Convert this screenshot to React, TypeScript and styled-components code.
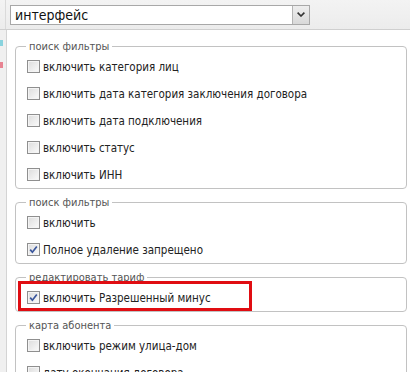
import styled, { createGlobalStyle } from "styled-components";

const GlobalStyle = createGlobalStyle`
  html, body {
    margin: 0;
    padding: 0;
    background: #ffffff;
  }
  body {
    font-family: "DejaVu Sans Condensed", "DejaVu Sans", sans-serif;
    color: #222222;
  }
`;

type Option = {
  label: string;
  checked?: boolean;
  highlighted?: boolean;
};

type Group = {
  title: string;
  options: Option[];
};

const groups: Group[] = [
  {
    title: "поиск фильтры",
    options: [
      { label: "включить категория лиц" },
      { label: "включить дата категория заключения договора" },
      { label: "включить дата подключения" },
      { label: "включить статус" },
      { label: "включить ИНН" },
    ],
  },
  {
    title: "поиск фильтры",
    options: [
      { label: "включить" },
      { label: "Полное удаление запрещено", checked: true },
    ],
  },
  {
    title: "редактировать тариф",
    options: [
      { label: "включить Разрешенный минус", checked: true, highlighted: true },
    ],
  },
  {
    title: "карта абонента",
    options: [
      { label: "включить режим улица-дом" },
      { label: "дату окончания договора" },
    ],
  },
];

function Checkbox({ checked }: { checked?: boolean }) {
  return (
    <Box>
      {checked && (
        <svg width="9" height="9" viewBox="0 0 9 9">
          <path
            d="M1.2 4.6 L3.4 7.2 L7.8 1.4"
            fill="none"
            stroke="#3a569c"
            strokeWidth="1.7"
          />
        </svg>
      )}
    </Box>
  );
}

function App() {
  return (
    <Page>
      <GlobalStyle />
      <TopBar>
        <TopDivider />
        <Select>
          <SelectValue>интерфейс</SelectValue>
          <SelectButton>
            <svg width="8" height="5" viewBox="0 0 8 5">
              <path d="M0.6 0.6 L4 4 L7.4 0.6" fill="none" stroke="#333" strokeWidth="1.6" />
            </svg>
          </SelectButton>
        </Select>
      </TopBar>

      <Body>
        <SideStrip>
          <SideMark $color="#5cc6d6" $top={10} />
          <SideMark $color="#e4566a" $top={32} />
        </SideStrip>

        <Content>
          {groups.map((group, i) => (
            <Fieldset key={i}>
              <Legend>{group.title}</Legend>
              {group.options.map((option) => (
                <Row key={option.label}>
                  {option.highlighted && <Highlight />}
                  <Checkbox checked={option.checked} />
                  <Label>{option.label}</Label>
                </Row>
              ))}
            </Fieldset>
          ))}
        </Content>
      </Body>
    </Page>
  );
}

const Page = styled.div`
  width: 410px;
  height: 372px;
  overflow: hidden;
  display: flex;
  flex-direction: column;
`;

const TopBar = styled.div`
  height: 30px;
  flex-shrink: 0;
  display: flex;
  align-items: center;
  background: linear-gradient(#f3f3f3, #ececec);
  border-bottom: 1px solid #cfcfcf;
  box-sizing: border-box;
`;

const TopDivider = styled.div`
  width: 6px;
  height: 100%;
  margin-right: 4px;
  border-right: 1px solid #dadada;
  box-sizing: border-box;
`;

const Select = styled.div`
  width: 300px;
  height: 20px;
  display: flex;
  border: 1px solid #a8a8a8;
  background: #ffffff;
  box-sizing: border-box;
`;

const SelectValue = styled.div`
  flex: 1;
  padding-left: 4px;
  font-size: 14px;
  line-height: 18px;
  color: #111111;
`;

const SelectButton = styled.div`
  width: 16px;
  display: flex;
  align-items: center;
  justify-content: center;
  border-left: 1px solid #b4b4b4;
  background: linear-gradient(#eeeeee, #d9d9d9);
`;

const Body = styled.div`
  flex: 1;
  display: flex;
  min-height: 0;
`;

const SideStrip = styled.div`
  position: relative;
  width: 6px;
  flex-shrink: 0;
  background: #f0f0f0;
  border-right: 1px solid #d4d4d4;
`;

const SideMark = styled.div<{ $color: string; $top: number }>`
  position: absolute;
  left: 0;
  top: ${(p) => p.$top}px;
  width: 3px;
  height: 6px;
  background: ${(p) => p.$color};
  opacity: 0.7;
`;

const Content = styled.div`
  flex: 1;
  padding: 10px 3px 0 8px;
  display: flex;
  flex-direction: column;
  gap: 7px;
`;

const Fieldset = styled.fieldset`
  margin: 0;
  padding: 0 10px 0 11px;
  border: 1px solid #c2c2c2;
  border-radius: 4px;
  min-width: 0;
`;

const Legend = styled.legend`
  padding: 0 3px;
  margin-left: -1px;
  font-size: 11px;
  line-height: 13px;
  color: #555555;
`;

const Row = styled.div`
  position: relative;
  height: 27px;
  display: flex;
  align-items: center;
  gap: 3px;
`;

const Box = styled.span`
  width: 13px;
  height: 13px;
  flex-shrink: 0;
  box-sizing: border-box;
  display: flex;
  align-items: center;
  justify-content: center;
  border: 1px solid #8f8f8f;
  background: linear-gradient(135deg, #dcdcdc, #fbfbfb);
  box-shadow: inset 0 0 0 1px #f4f4f4;
`;

const Label = styled.span`
  font-size: 11.5px;
  color: #222222;
  white-space: nowrap;
`;

const Highlight = styled.span`
  position: absolute;
  left: -9px;
  top: -3px;
  width: 234px;
  height: 30px;
  box-sizing: border-box;
  border: 3px solid #e00d12;
  pointer-events: none;
`;

export default App;
